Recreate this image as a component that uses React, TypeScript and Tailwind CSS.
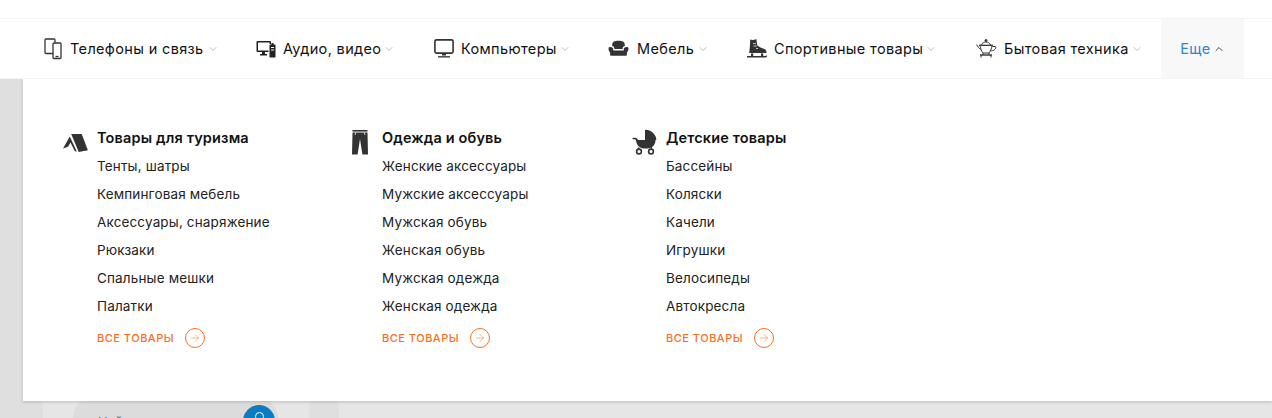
import { ChevronDown, ChevronUp, ArrowRight } from 'lucide-react'

const font = { fontFamily: '"Inter", "Noto Sans", sans-serif' }

function PhoneIcon() {
  return (
    <svg width="18" height="22" viewBox="0 0 18 22" fill="none" stroke="#333" strokeWidth="1.3">
      <path d="M9 15.5H2a1 1 0 0 1-1-1V2a1 1 0 0 1 1-1h8a1 1 0 0 1 1 1v2.5" />
      <rect x="9" y="5" width="8" height="15.5" rx="1" />
      <path d="M11.5 18.5h3" />
    </svg>
  )
}

function AudioIcon() {
  return (
    <svg width="20" height="18" viewBox="0 0 20 18" fill="#222">
      <path d="M1.5 1h12.5a1 1 0 0 1 1 1v2h-1.5V2.5H2v8h10.5V12H1.5a1 1 0 0 1-1-1V2a1 1 0 0 1 1-1z" />
      <path d="M6 12h3v2h2v1.5H4V14h2z" />
      <path d="M14 4.5h1.5V3h2v1.5H19a.5.5 0 0 1 .5.5v12a.5.5 0 0 1-.5.5h-5a.5.5 0 0 1-.5-.5V5a.5.5 0 0 1 .5-.5z" />
      <rect x="15" y="7" width="3" height="1" fill="#fff" />
      <rect x="15" y="9.5" width="3" height="1" fill="#fff" />
    </svg>
  )
}

function MonitorIcon() {
  return (
    <svg width="20" height="20" viewBox="0 0 20 20" fill="none">
      <rect x="0.9" y="0.9" width="18.2" height="13.2" rx="1.5" stroke="#333" strokeWidth="1.6" />
      <path d="M8 15h4v1.5H8z" fill="#333" />
      <rect x="4" y="17" width="12" height="1.6" fill="#555" />
    </svg>
  )
}

function SofaIcon() {
  return (
    <svg width="21" height="19" viewBox="0 0 20 18" fill="#333">
      <path d="M4 5.5C4 2.5 6 1.5 10 1.5s6 1 6 4v1.2c-1.4.2-2 1.2-2 2.3v.5H6V9c0-1.100-.6-2.100-2-2.300z" />
      <path d="M.5 9c0-1.200.9-1.500 1.700-1.500 1.300 0 2.800.6 2.800 2.200V11h10V9.700c0-1.600 1.500-2.200 2.800-2.200.8 0 1.700.3 1.700 1.500 0 2-.8 3-1.500 3.800V15a1 1 0 0 1-1 1H3a1 1 0 0 1-1-1v-2.200C1.300 12 .5 11 .5 9z" />
    </svg>
  )
}

function SkateIcon() {
  return (
    <svg width="20" height="20" viewBox="0 0 20 20" fill="#333">
      <path d="M3.2.6C5.200 1.100 7.200 1 9.300 0c.4 2.200.6 4.300 1 6.200 1.800 1.900 5 3 7 3.700 1.600.6 2.200 1.700 2.200 4.100H2.200C2.700 9.500 3.200 5 3.200.6z" />
      <path d="M6 4.500h3M6.500 7h3.500M9 9.500h2" stroke="#fff" strokeWidth=".7" />
      <path d="M4 14.500h2.200V17H4zM14 14.500h2.200V17H14z" />
      <path d="M0 17h18.500c.7 0 1-.3 1.200-.8l.3.100v.9c-.3.800-1 1.300-1.800 1.300H0z" />
    </svg>
  )
}

function KettleIcon() {
  return (
    <svg width="21" height="19" viewBox="0 0 21 19" fill="none" stroke="#333" strokeWidth="1">
      <circle cx="10" cy="1.5" r="1" fill="#333" />
      <path d="M5.500 6c.6-2 2.400-3 4.500-3s3.900 1 4.500 3" />
      <path d="M3 6.300h14" strokeWidth="1.3" />
      <path d="M4 6.500c.4 3.200 1.600 6 3.200 7.500h5.600c1.600-1.500 2.800-4.300 3.200-7.500" />
      <path d="M16.500 7.500h2.500c1.600 0 1.300 3.800-3.900 4.500" />
      <path d="M4.500 10.500C3 9.500 1.800 7.500.4 5.500" />
      <path d="M4 16h12" strokeWidth="1.4" />
      <path d="M7 14v2M13 14v2M5 16v2.500M15 16v2.500" />
    </svg>
  )
}

function TentIcon() {
  return (
    <svg width="26" height="20" viewBox="0 0 26 20" fill="#333">
      <path d="M8.200 1 18.700 1 24.900 17.200 15.700 19z" />
      <path d="M6.800 3.500 0 15.500 5 13.800 7.500 9.500 11.800 18.300 13.800 18.600z" />
    </svg>
  )
}

function PantsIcon() {
  return (
    <svg width="16" height="26" viewBox="0 0 16 26" fill="#333">
      <path d="M.5 1h15v1.600H.5z" />
      <path d="M.5 3.400h15l.5 22.100h-5.600L8 10 5.600 25.500H0z" />
      <path d="M3.800 3.400 3 6M12.200 3.400 13 6" stroke="#fff" strokeWidth=".7" />
    </svg>
  )
}

function StrollerIcon() {
  return (
    <svg width="26" height="26" viewBox="0 0 26 26">
      <path d="M14 .7C20 .5 25.500 5.500 25.300 11H14z" fill="#333" />
      <path d="M4 8.800c2 .1 2.500 1 3 2.300h17.500c0 5-3 8-8.500 8.500h-3C7.500 19 5.500 15 5 11.500c-.3-.8-.8-1.200-2.500-1.200-.8 0-1.100-.4-1.100-.8 0-.5.400-.8 2.600-.7z" fill="#333" />
      <path d="M8 18.500 7.500 20M20 18l.5 2" stroke="#333" strokeWidth="1.5" />
      <circle cx="8" cy="22.500" r="2.400" fill="#fff" stroke="#333" strokeWidth="1.6" />
      <circle cx="20" cy="22.500" r="2.400" fill="#fff" stroke="#333" strokeWidth="1.6" />
    </svg>
  )
}

const navItems = [
  { label: 'Телефоны и связь', icon: <PhoneIcon />, width: 'w-[212px]', gap: 'gap-[8px]' },
  { label: 'Аудио, видео', icon: <AudioIcon />, width: 'w-[178px]', gap: 'gap-[7px]' },
  { label: 'Компьютеры', icon: <MonitorIcon />, width: 'w-[174px]', gap: 'gap-[7px]' },
  { label: 'Мебель', icon: <SofaIcon />, width: 'w-[139px]', gap: 'gap-[8px]' },
  { label: 'Спортивные товары', icon: <SkateIcon />, width: 'w-[229px]', gap: 'gap-[7px]' },
  { label: 'Бытовая техника', icon: <KettleIcon />, width: 'w-[185px]', gap: 'gap-[7px]' },
]

const columns = [
  {
    title: 'Товары для туризма',
    icon: <TentIcon />,
    iconBox: 'w-[35px] pt-[4px] pl-[1px]',
    width: 'w-[290px]',
    links: ['Тенты, шатры', 'Кемпинговая мебель', 'Аксессуары, снаряжение', 'Рюкзаки', 'Спальные мешки', 'Палатки'],
  },
  {
    title: 'Одежда и обувь',
    icon: <PantsIcon />,
    iconBox: 'w-[30px]',
    width: 'w-[279px]',
    links: ['Женские аксессуары', 'Мужские аксессуары', 'Мужская обувь', 'Женская обувь', 'Мужская одежда', 'Женская одежда'],
  },
  {
    title: 'Детские товары',
    icon: <StrollerIcon />,
    iconBox: 'w-[35px]',
    width: 'w-[220px]',
    links: ['Бассейны', 'Коляски', 'Качели', 'Игрушки', 'Велосипеды', 'Автокресла'],
  },
]

export default function App() {
  return (
    <div className="relative h-[418px] w-[1272px] overflow-hidden bg-[#dfdfdf]" style={font}>
      <div className="h-[18px] bg-white" />
      <nav className="relative z-10 flex h-[61px] items-center border-y border-[#f3f3f3] bg-white pl-[44px]">
        {navItems.map((item) => (
          <div key={item.label} className={`flex items-center ${item.width} ${item.gap}`}>
            {item.icon}
            <span className="text-[14.5px] tracking-[0.35px] text-[#111]">{item.label}</span>
            <ChevronDown size={12} strokeWidth={1.5} className="-ml-[5px] text-[#aaa]" />
          </div>
        ))}
        <div className="flex h-full w-[83px] items-center justify-center gap-[2px] bg-[#f8f8f8]">
          <span className="text-[14.5px] tracking-[0.5px] text-[#2b86d0]">Еще</span>
          <ChevronUp size={12} strokeWidth={2} className="text-[#444]" />
        </div>
      </nav>

      <div className="flex pl-[43px]">
        <aside className="mt-[322px] h-[200px] w-[267px] border-r border-[#e2e2e2] bg-[#e6e6e6] pl-[30px] pr-[31px]">
          <div className="-mt-[3px] flex h-[40px] items-start justify-between rounded-full bg-[#dcdcdc] pl-[25px] pr-[3px]">
            <span className="pt-[16px] text-[13px] leading-[16px] text-[#555]">Найти</span>
            <div className="mt-[7px] flex h-[32px] w-[32px] justify-center rounded-full bg-[#0a7cc1] pt-[7px]">
              <span className="h-[9px] w-[9px] rounded-full border border-white" />
            </div>
          </div>
        </aside>
        <div className="ml-[29px] flex-1 bg-[#e6e6e6]" />
      </div>

      <div className="absolute left-[23px] top-[79px] flex h-[322px] w-[1249px] bg-white pl-[39px] pt-[50px] shadow-[0_1px_3px_rgba(0,0,0,0.18)]">
        {columns.map((col) => (
          <section key={col.title} className={`flex ${col.width}`}>
            <div className={`${col.iconBox} shrink-0`}>{col.icon}</div>
            <div className="flex flex-col items-start">
              <h3 className="text-[14.5px] font-semibold leading-[18px] tracking-[0.15px] text-[#111]">{col.title}</h3>
              <ul className="mt-[5px]">
                {col.links.map((link) => (
                  <li key={link} className="h-[28px] text-[13.5px] leading-[28px] tracking-[0.15px] text-[#222]">
                    {link}
                  </li>
                ))}
              </ul>
              <a className="mt-[8px] flex items-center gap-[11px] text-[11px] font-medium tracking-[0.5px] text-[#f5701f]">
                ВСЕ ТОВАРЫ
                <span className="flex h-[20px] w-[20px] items-center justify-center rounded-full border border-[#f5701f]">
                  <ArrowRight size={12} strokeWidth={1} />
                </span>
              </a>
            </div>
          </section>
        ))}
      </div>
    </div>
  )
}
